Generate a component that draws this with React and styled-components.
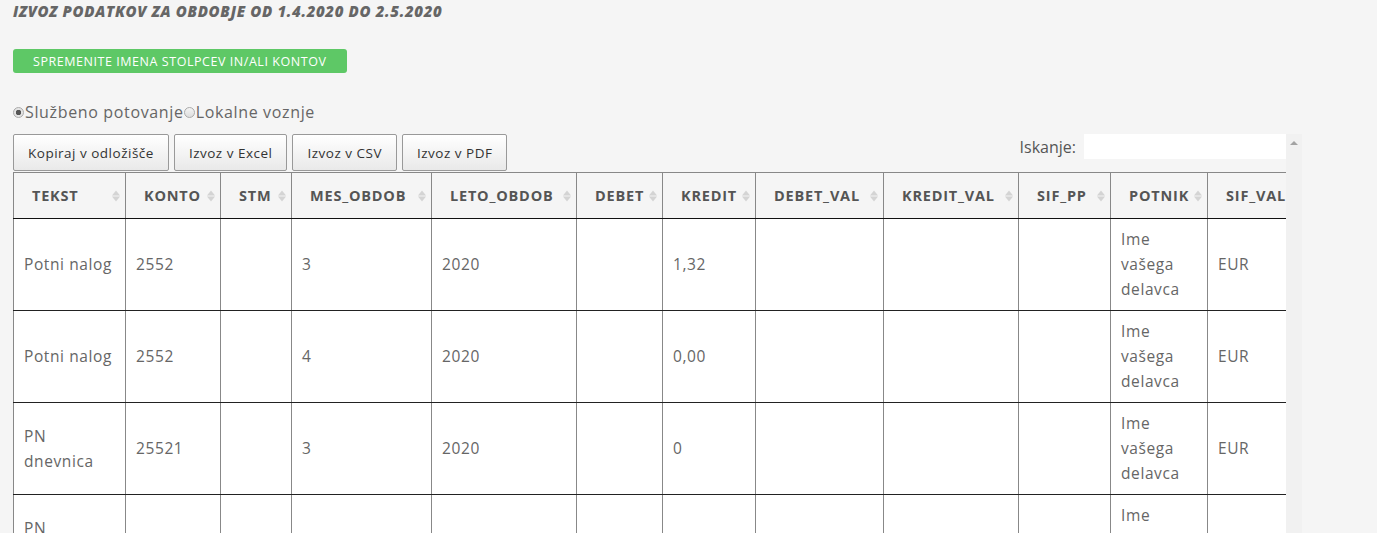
import React from 'react'
import styled, { createGlobalStyle } from 'styled-components'

const GlobalStyle = createGlobalStyle`
  body {
    margin: 0;
    background: #f5f5f5;
    font-family: 'Open Sans', 'DejaVu Sans', sans-serif;
    color: #666;
  }
`

const Page = styled.div`
  padding: 0 0 0 13px;
  width: 1289px;
`

const Title = styled.h4`
  margin: 0;
  padding-top: 2px;
  font-size: 15px;
  font-weight: 800;
  font-style: italic;
  color: #666;
  letter-spacing: 0.65px;
  line-height: 18px;
`

const GreenButton = styled.button`
  margin-top: 29px;
  width: 334px;
  height: 24px;
  border: none;
  border-radius: 3px;
  background: #5ec866;
  color: #fff;
  font-family: 'Open Sans', sans-serif;
  font-size: 12.5px;
  font-weight: 500;
  letter-spacing: 0.55px;
  text-align: left;
  padding: 0 0 0 20px;
`

const RadioRow = styled.div`
  margin-top: 27px;
  display: flex;
  align-items: center;
  font-size: 16px;
  letter-spacing: 0.65px;
  color: #666;
  height: 24px;
`

const Radio = styled.span`
  width: 9px;
  height: 9px;
  border-radius: 50%;
  border: 1px solid #aaa;
  background: ${p => (p.checked ? 'radial-gradient(circle, #555 0 2.5px, #e4e4e4 3px)' : 'linear-gradient(#f4f4f4, #ddd)')};
  margin-right: 1px;
  flex: none;
`

const Frame = styled.div`
  margin-top: 10px;
  display: flex;
  height: 400px;
`

const Scroller = styled.div`
  width: 1273px;
  min-width: 0;
  overflow: hidden;
`

const ScrollTrack = styled.div`
  width: 16px;
  background: #f1f1f1;
  display: flex;
  justify-content: center;
  padding-top: 7px;
  box-sizing: border-box;
`

const Arrow = styled.span`
  width: 0;
  height: 0;
  border-left: 4px solid transparent;
  border-right: 4px solid transparent;
  border-bottom: 4px solid #a3a3a3;
`

const Toolbar = styled.div`
  display: flex;
  align-items: flex-start;
  justify-content: space-between;
`

const ButtonGroup = styled.div`
  display: flex;
  gap: 5px;
`

const ToolButton = styled.button`
  height: 37px;
  padding: 0 14px;
  border: 1px solid #999;
  border-radius: 2px;
  background: linear-gradient(#ffffff, #e9e9e9);
  color: #333;
  font-family: 'Open Sans', sans-serif;
  font-size: 13.5px;
  letter-spacing: 0.5px;
`

const Search = styled.label`
  display: flex;
  align-items: center;
  gap: 8px;
  font-size: 16px;
  color: #555;
  height: 25px;
`

const SearchInput = styled.input`
  width: 202px;
  height: 25px;
  border: none;
  background: #fff;
  box-sizing: border-box;
  outline: none;
`

const Table = styled.table`
  table-layout: fixed;
  border-collapse: collapse;
  width: ${p => p.width}px;
  margin-top: 1px;
`

const Th = styled.th`
  position: relative;
  height: 46px;
  box-sizing: border-box;
  padding: 0 20px 0 18px;
  text-align: left;
  font-size: 14.5px;
  font-weight: 700;
  letter-spacing: 0.8px;
  color: #555;
  background: #f5f5f5;
  border-left: 1px solid #888;
  border-right: 1px solid #888;
  border-top: 1px solid #888;
  border-bottom: 1px solid #111;
  white-space: nowrap;
  overflow: hidden;
`

const Sort = styled.span`
  position: absolute;
  right: 5px;
  top: 50%;
  transform: translateY(-50%);
  display: flex;
  flex-direction: column;
  gap: 1px;

  &::before,
  &::after {
    content: '';
    border-left: 4px solid transparent;
    border-right: 4px solid transparent;
  }
  &::before { border-bottom: 5px solid #d4d4d4; }
  &::after { border-top: 5px solid #d4d4d4; }
`

const Td = styled.td`
  height: 91px;
  box-sizing: border-box;
  padding: 8px 10px;
  background: #fff;
  font-size: 15.5px;
  letter-spacing: 0.6px;
  line-height: 25px;
  color: #666;
  border-left: 1px solid #888;
  border-right: 1px solid #888;
  border-bottom: 1px solid #222;
  vertical-align: middle;
`

const columns = [
  ['TEKST', 112],
  ['KONTO', 95],
  ['STM', 71],
  ['MES_OBDOB', 140],
  ['LETO_OBDOB', 145],
  ['DEBET', 86],
  ['KREDIT', 93],
  ['DEBET_VAL', 128],
  ['KREDIT_VAL', 135],
  ['SIF_PP', 92],
  ['POTNIK', 97],
  ['SIF_VAL', 110],
]

const tableWidth = columns.reduce((s, [, w]) => s + w, 0)

const rows = [
  ['Potni nalog', '2552', '', '3', '2020', '', '1,32', '', '', '', 'Ime vašega delavca', 'EUR'],
  ['Potni nalog', '2552', '', '4', '2020', '', '0,00', '', '', '', 'Ime vašega delavca', 'EUR'],
  ['PN dnevnica', '25521', '', '3', '2020', '', '0', '', '', '', 'Ime vašega delavca', 'EUR'],
  ['PN dnevnica', '25521', '', '4', '2020', '', '0', '', '', '', 'Ime vašega delavca', 'EUR'],
]

const App = () => {
  return (
    <>
      <GlobalStyle />
      <Page>
        <Title>IZVOZ PODATKOV ZA OBDOBJE OD 1.4.2020 DO 2.5.2020</Title>
        <GreenButton>SPREMENITE IMENA STOLPCEV IN/ALI KONTOV</GreenButton>
        <RadioRow>
          <Radio checked />Službeno potovanje<Radio />Lokalne voznje
        </RadioRow>
        <Frame>
          <Scroller>
            <Toolbar>
              <ButtonGroup>
                <ToolButton>Kopiraj v odložišče</ToolButton>
                <ToolButton>Izvoz v Excel</ToolButton>
                <ToolButton>Izvoz v CSV</ToolButton>
                <ToolButton>Izvoz v PDF</ToolButton>
              </ButtonGroup>
              <Search>
                Iskanje:
                <SearchInput />
              </Search>
            </Toolbar>
            <Table width={tableWidth}>
              <colgroup>
                {columns.map(([name, w]) => (
                  <col key={name} style={{ width: w }} />
                ))}
              </colgroup>
              <thead>
                <tr>
                  {columns.map(([name]) => (
                    <Th key={name}>
                      {name}
                      <Sort />
                    </Th>
                  ))}
                </tr>
              </thead>
              <tbody>
                {rows.map((r, i) => (
                  <tr key={i}>
                    {r.map((c, j) => (
                      <Td key={j}>{c}</Td>
                    ))}
                  </tr>
                ))}
              </tbody>
            </Table>
          </Scroller>
          <ScrollTrack>
            <Arrow />
          </ScrollTrack>
        </Frame>
      </Page>
    </>
  )
}

export default App
